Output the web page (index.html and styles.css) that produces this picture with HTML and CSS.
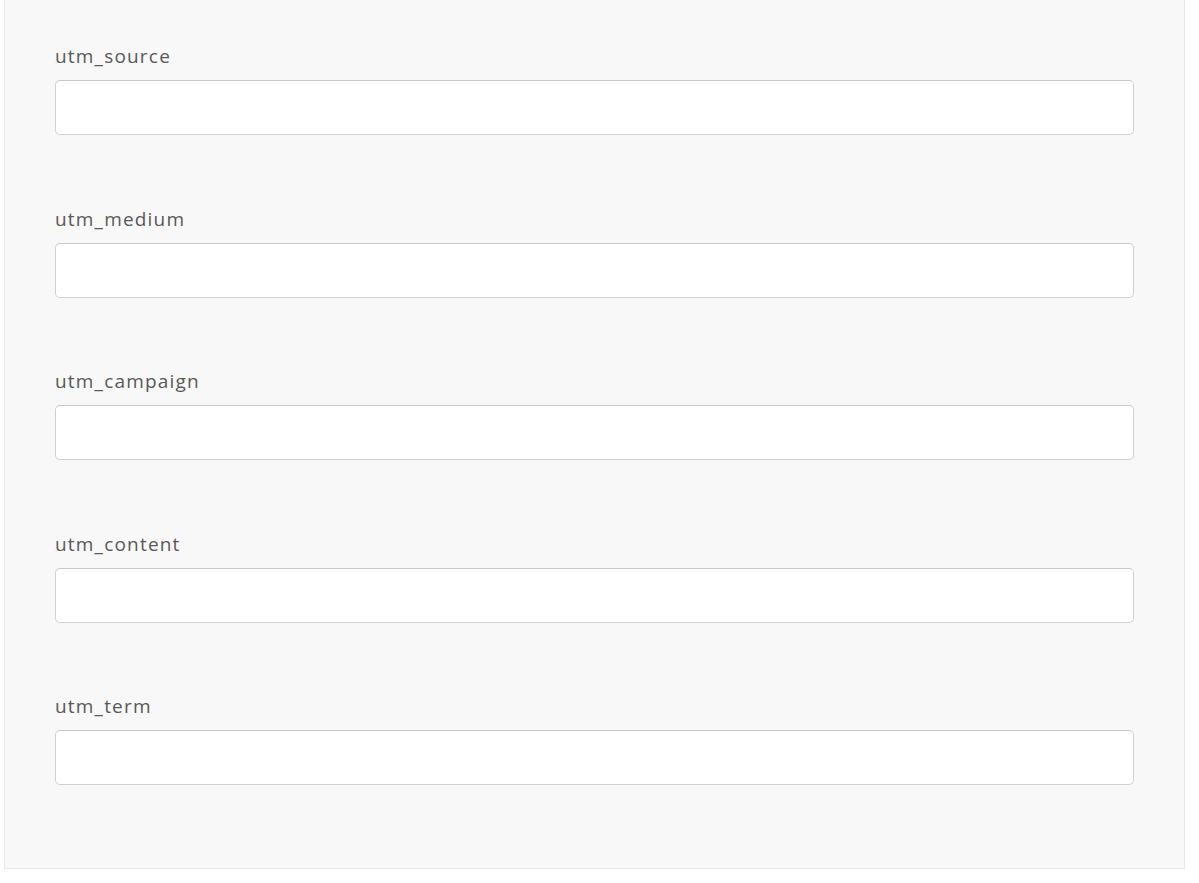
FILE: index.html
```html
<!DOCTYPE html>
<html lang="en">
<head>
    <meta charset="UTF-8">
    <meta name="viewport" content="width=device-width, initial-scale=1.0">
    <title>UTM parameters</title>
    <link rel="stylesheet" href="styles.css">
</head>
<body>
    <div class="panel">
        <div class="field">
            <label class="field-label" for="utm_source">utm_source</label>
            <input class="field-input" id="utm_source" type="text">
        </div>
        <div class="field">
            <label class="field-label" for="utm_medium">utm_medium</label>
            <input class="field-input" id="utm_medium" type="text">
        </div>
        <div class="field">
            <label class="field-label" for="utm_campaign">utm_campaign</label>
            <input class="field-input" id="utm_campaign" type="text">
        </div>
        <div class="field">
            <label class="field-label" for="utm_content">utm_content</label>
            <input class="field-input" id="utm_content" type="text">
        </div>
        <div class="field">
            <label class="field-label" for="utm_term">utm_term</label>
            <input class="field-input" id="utm_term" type="text">
        </div>
    </div>
</body>
</html>
```

FILE: styles.css
```css
body{
    font-family: 'Open Sans', Lato, sans-serif;
    background-color: white;
    color: #555;
    margin: 0;
}
.panel{
    margin: -1px 0 0 4px;
    padding: 44px 50px 83px 50px;
    box-sizing: border-box;
    width: 1181px;
    background-color: #f8f8f8;
    border: 1px solid #e8e8e8;
}
.field{
    display: flex;
    flex-direction: column;
    margin-bottom: 71.5px;
}
.field:last-child{
    margin-bottom: 0;
}
.field-label{
    font-size: 19px;
    line-height: 24px;
    letter-spacing: 1.2px;
    color: #585858;
    margin-bottom: 12px;
}
.field-input{
    height: 55px;
    box-sizing: border-box;
    border: 1px solid #d0d0d0;
    border-top-color: #c8c8c8;
    border-radius: 5px;
    background-color: white;
    outline: none;
    font-family: 'Open Sans', sans-serif;
    font-size: 18px;
    padding: 0 15px;
}
```
